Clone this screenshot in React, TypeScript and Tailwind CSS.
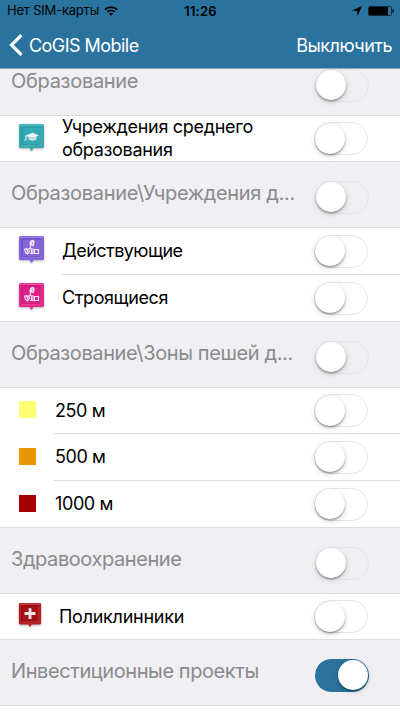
import React, { useState } from 'react';

type IconKind = 'school' | 'active' | 'building' | 'clinic';

interface Layer {
  name: string;
  icon?: IconKind;
  swatch?: string;
  height: string;
  indent: string;
  tracking: string;
}

interface Group {
  name: string;
  tracking: string;
  layers: Layer[];
}

const groups: Group[] = [
  {
    name: 'Образование',
    tracking: 'tracking-[-0.3px]',
    layers: [
      { name: 'Учреждения среднего образования', icon: 'school', height: 'h-[46px]', indent: 'pl-[62px]', tracking: 'tracking-[-0.31px]' },
    ],
  },
  {
    name: 'Образование\\Учреждения д...',
    tracking: 'tracking-[-0.32px]',
    layers: [
      { name: 'Действующие', icon: 'active', height: 'h-[47px]', indent: 'pl-[62px]', tracking: 'tracking-[-0.54px]' },
      { name: 'Строящиеся', icon: 'building', height: 'h-[47px]', indent: 'pl-[62px]', tracking: 'tracking-[-0.4px]' },
    ],
  },
  {
    name: 'Образование\\Зоны пешей д...',
    tracking: 'tracking-[-0.38px]',
    layers: [
      { name: '250 м', swatch: 'bg-[#ffff73]', height: 'h-[46px]', indent: 'pl-[54px]', tracking: 'tracking-[-0.4px]' },
      { name: '500 м', swatch: 'bg-[#e69800]', height: 'h-[47px]', indent: 'pl-[54px]', tracking: 'tracking-[-0.4px]' },
      { name: '1000 м', swatch: 'bg-[#a80000]', height: 'h-[47px]', indent: 'pl-[54px]', tracking: 'tracking-[-0.4px]' },
    ],
  },
  {
    name: 'Здравоохранение',
    tracking: 'tracking-[-0.42px]',
    layers: [
      { name: 'Поликлинники', icon: 'clinic', height: 'h-[46px]', indent: 'pl-[59px]', tracking: 'tracking-[-0.27px]' },
    ],
  },
  { name: 'Инвестиционные проекты', tracking: 'tracking-[-0.42px]', layers: [] },
];

const pinColors: Record<IconKind, { edge: string; light: string; dark: string }> = {
  school: { edge: '#35aab3', light: '#33aab3', dark: '#24909a' },
  active: { edge: '#8261dc', light: '#8465d8', dark: '#6446bd' },
  building: { edge: '#e62a8c', light: '#e0218a', dark: '#c00f6c' },
  clinic: { edge: '#b81d22', light: '#a51318', dark: '#840a0e' },
};

function Pin({ kind }: { kind: IconKind }) {
  const c = pinColors[kind];
  const size = kind === 'clinic' ? 'w-[24px] h-[27px]' : 'w-[27px] h-[30px]';

  return (
    <svg viewBox="0 0 27 30" className={`${size} drop-shadow-[0_1px_1px_rgba(0,0,0,0.3)]`}>
      <path d="M2.5 1h22A1.5 1.5 0 0 1 26 2.5v21a1.500 1.500 0 0 1-1.500 1.500h-9l-2 3-2-3h-9A1.500 1.500 0 0 1 1 23.500v-21A1.500 1.500 0 0 1 2.500 1z" fill={c.edge} />
      <path d="M2 2.200h23" stroke="#fff" strokeOpacity="0.25" />
      <rect x="4" y="4" width="19" height="17.500" rx="1.200" fill={c.light} stroke={c.dark} strokeWidth="1" />
      <path d="M4.500 22h18.500V5" fill="none" stroke="#fff" strokeOpacity="0.18" />
      {kind === 'school' && (
        <g>
          <path d="M7 13 14.500 9.800l6.500 2.700-6 2.300z" fill="#f4f8f8" />
          <path d="M10.500 13.500v3.200c2 1.400 6 1.400 8-.5v-3l-3.500 1.600z" fill="#c6dde2" />
          <path d="M8 13v3.500l-1.500 1" fill="none" stroke="#d3e5e8" strokeWidth="1.200" />
        </g>
      )}
      {(kind === 'active' || kind === 'building') && (
        <g fill="none" stroke="#f5e9fa" strokeWidth="1.100">
          <path d="M12.500 10.500c-1-2 .5-4.500 2-5 1.800 0 1.600 3.200 0 5.500" strokeWidth="1.500" />
          <path d="M14.500 6.500 12 13" />
          <path d="M6.500 14h4l1 2.500-2 2.500-2-1.500zM11 13.500l4 .5v4.500h-3M16.500 14.500h4v4h-4zM8.500 13l1.500 5M13.500 14v4" />
        </g>
      )}
      {kind === 'clinic' && (
        <path d="M11.900 6.800h3.200v4.400h4.600v3.300h-4.600v4.400h-3.200v-4.400H7.300v-3.300h4.600z" fill="#ece4e6" />
      )}
    </svg>
  );
}

interface ToggleProps {
  on: boolean;
  inset?: boolean;
  onChange: () => void;
}

function Toggle({ on, inset, onChange }: ToggleProps) {
  return (
    <button
      role="switch"
      aria-checked={on}
      onClick={onChange}
      className={`flex h-[33px] w-[54px] shrink-0 items-center rounded-full ${
        on
          ? 'justify-end bg-[#2a739e] pr-px'
          : inset
            ? 'justify-start border-[1.5px] border-[#e5e5e7]'
            : 'justify-start border-[1.5px] border-[#e5e5e5] bg-white'
      }`}
    >
      <span className="size-[30px] rounded-full bg-white shadow-[0_1.5px_2px_rgba(0,0,0,0.35),0_2px_7px_rgba(0,0,0,0.14)]" />
    </button>
  );
}

function StatusBar() {
  return (
    <div className="flex h-[22px] items-center pl-[7px] pr-[6px] text-[13px] text-black">
      <div className="flex flex-1 items-center gap-[5px]">
        <span className="whitespace-nowrap tracking-[-0.2px]">Нет SIM-карты</span>
        <svg viewBox="0 0 14 10" className="h-[10px] w-[14px]" fill="none" stroke="#000" strokeWidth="1.700">
          <path d="M.8 3.600a8.800 8.800 0 0 1 12.400 0" />
          <path d="M3.200 6a5.400 5.400 0 0 1 7.600 0" />
          <path d="M7 9.800 4.900 7.700a3 3 0 0 1 4.200 0z" fill="#000" stroke="none" />
        </svg>
      </div>
      <span className="pt-px font-semibold tracking-[0.2px]">11:26</span>
      <div className="flex flex-1 items-center justify-end gap-[6px]">
        <svg viewBox="0 0 10 10" className="size-[10px]">
          <path d="M10 0 5.600 10 5 5 0 4.400z" />
        </svg>
        <svg viewBox="0 0 26 10" className="h-[10px] w-[26px]">
          <rect x=".5" y=".5" width="23" height="9" rx="1" fill="none" stroke="#0d2c3f" />
          <rect x="1" y="1" width="19" height="8" />
          <path d="M24.500 3.200q1.500 0 1.500 1.800t-1.500 1.800z" />
        </svg>
      </div>
    </div>
  );
}

export default function App() {
  const [enabled, setEnabled] = useState<Record<string, boolean>>({
    'Инвестиционные проекты': true,
  });

  const toggle = (key: string) => {
    setEnabled(prev => ({ ...prev, [key]: !prev[key] }));
  };

  return (
    <div className="flex h-[711px] w-[400px] flex-col overflow-hidden bg-white font-[Inter,'Noto_Sans',sans-serif]">
      <header className="h-[69px] shrink-0 border-b border-[#8fa9bb] bg-[#2a739e]">
        <StatusBar />
        <nav className="flex h-[46px] items-center justify-between pl-[9px] pr-[8px] text-[18px] text-white">
          <button className="flex items-center gap-[6px]">
            <svg viewBox="0 0 14 22" className="h-[22px] w-[14px]" fill="none" stroke="#fff" strokeWidth="3.200">
              <path d="M12.500 1 2.500 11l10 10" />
            </svg>
            <span className="tracking-[-0.54px]">CoGIS Mobile</span>
          </button>
          <button className="tracking-[-0.5px]">Выключить</button>
        </nav>
      </header>

      <main className="flex flex-1 flex-col overflow-hidden">
        {groups.map((group, index) => (
          <section key={group.name} className="shrink-0">
            <div
              className={`flex items-end overflow-hidden border-b border-[#dcdcdf] bg-[#efeff4] ${
                index === 0 ? 'h-[47px]' : 'h-[66px]'
              }`}
            >
              <div className="flex h-[65px] w-full shrink-0 items-center justify-between pl-[11px] pr-[31px] pt-[5px]">
                <h2 className={`whitespace-nowrap pb-[9px] text-[20px] leading-[24px] text-[#8a8a8c] ${group.tracking}`}>
                  {group.name}
                </h2>
                <Toggle inset on={!!enabled[group.name]} onChange={() => toggle(group.name)} />
              </div>
            </div>

            {group.layers.map((layer, i) => {
              const last = i === group.layers.length - 1;
              return (
                <div key={layer.name} className={`grid grid-cols-1 grid-rows-1 ${layer.height}`}>
                  <div className="col-start-1 row-start-1 flex items-center pb-[3px] pl-[18px]">
                    {layer.icon && <Pin kind={layer.icon} />}
                    {layer.swatch && <span className={`ml-px size-[17px] ${layer.swatch}`} />}
                  </div>
                  <div className={`col-start-1 row-start-1 flex ${layer.indent}`}>
                    <div
                      className={`flex flex-1 items-center justify-between border-b pr-[32px] ${
                        last ? 'border-transparent' : 'border-[#dcdcdf]'
                      }`}
                    >
                      <span
                        className={`w-[215px] pb-px text-[18px] leading-[23px] text-black ${layer.tracking} ${
                          layer.swatch ? 'pl-px' : ''
                        }`}
                      >
                        {layer.name}
                      </span>
                      <Toggle on={!!enabled[layer.name]} onChange={() => toggle(layer.name)} />
                    </div>
                  </div>
                  {last && <div className="col-start-1 row-start-1 self-end border-b border-[#dcdcdf]" />}
                </div>
              );
            })}
          </section>
        ))}
      </main>
    </div>
  );
}
